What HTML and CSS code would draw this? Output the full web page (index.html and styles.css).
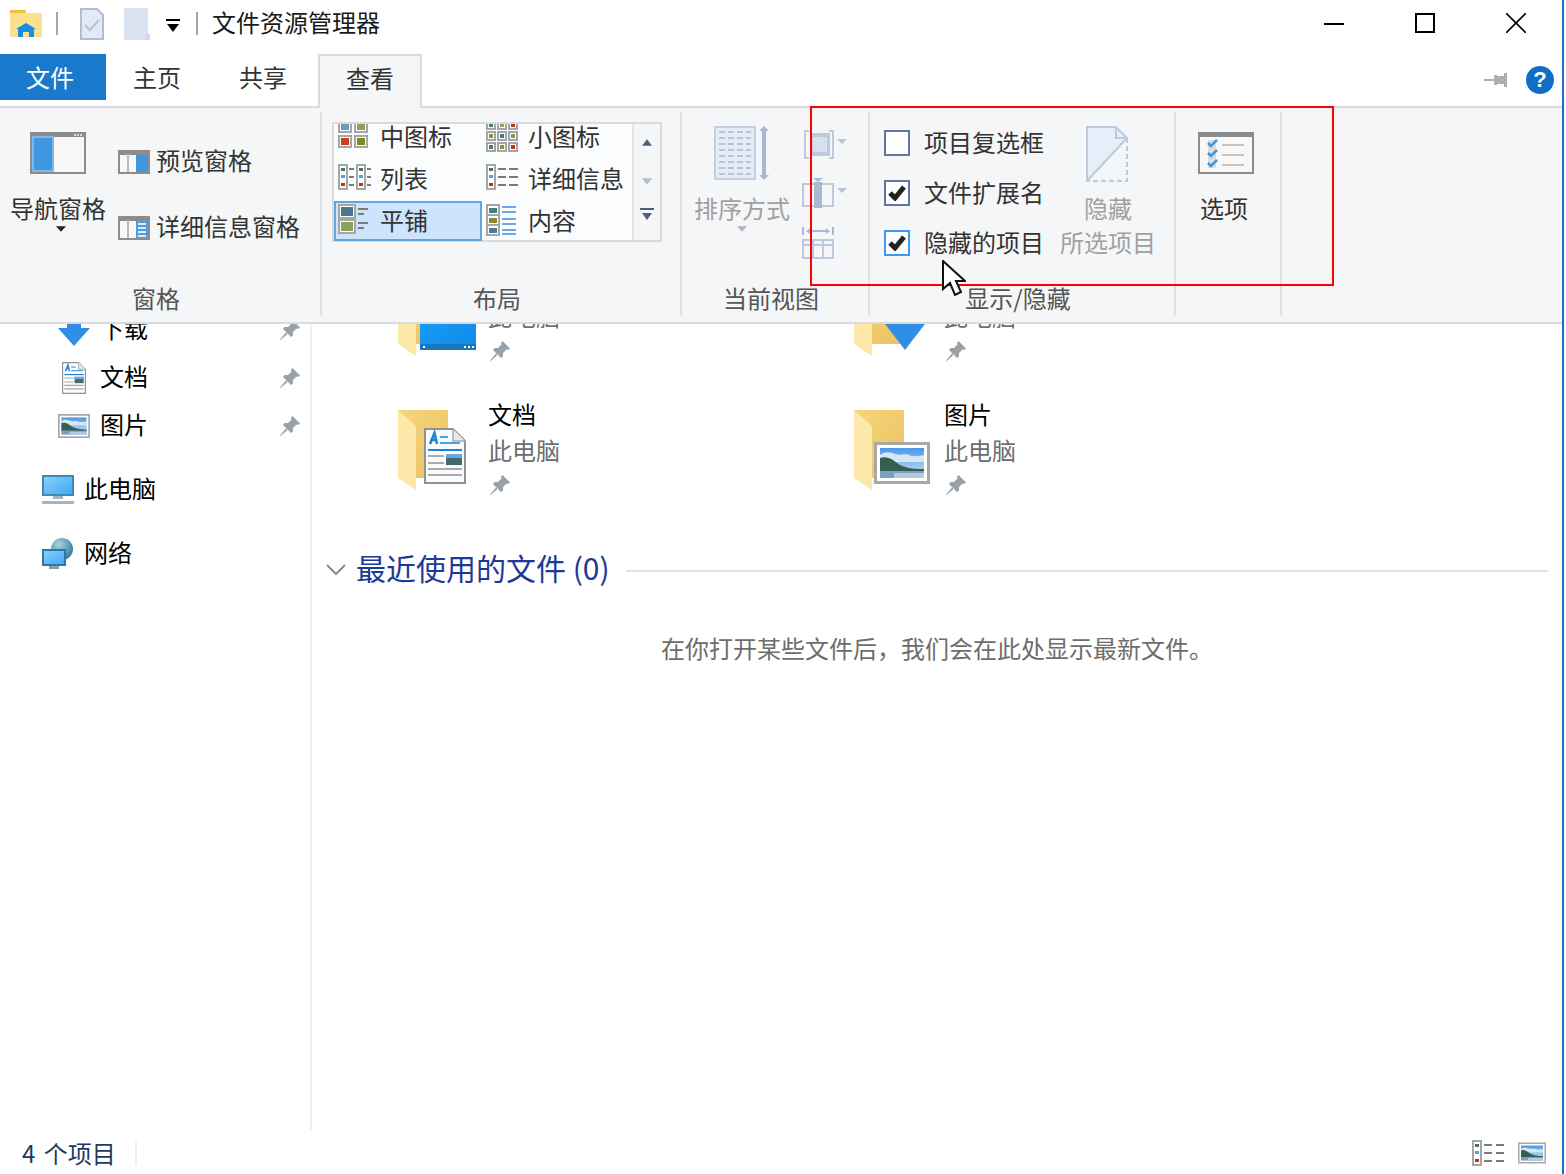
FILE: index.html
```html
<!DOCTYPE html>
<html lang="zh-CN">
<head>
    <meta charset="UTF-8">
    <title>文件资源管理器</title>
    <link rel="stylesheet" href="styles.css">
</head>
<body>
    <!-- shared icons -->
    <svg class="defs" width="0" height="0">
        <defs>
            <linearGradient id="sky" x1="0" y1="0" x2="0" y2="1"><stop offset="0" stop-color="#4f97e6"/><stop offset="1" stop-color="#cfe4f6"/></linearGradient>
            <linearGradient id="back" x1="0" y1="0" x2="1" y2="1"><stop offset="0" stop-color="#f6d67a"/><stop offset="1" stop-color="#ecc062"/></linearGradient>
            <linearGradient id="screen" x1="0" y1="0" x2="1" y2="1"><stop offset="0" stop-color="#1aa0fa"/><stop offset="1" stop-color="#0f8ae8"/></linearGradient>
            <linearGradient id="pale" x1="0" y1="0" x2="1" y2="1"><stop offset="0" stop-color="#8fd0fa"/><stop offset="1" stop-color="#3aa8f4"/></linearGradient>
            <radialGradient id="globe" cx="0.35" cy="0.3" r="0.8"><stop offset="0" stop-color="#a8d2e2"/><stop offset="0.6" stop-color="#5d9cba"/><stop offset="1" stop-color="#2f6f8a"/></radialGradient>
        </defs>
        <symbol id="pin" viewBox="0 0 20 20">
            <path fill="#98a1a8" d="M12.5 0 20 7.5 18 9l-1.5-.5L13 12v3.5L11 17 3 9l1.5-2H8l3.5-3.5L11 1.5z"/>
            <path fill="#98a1a8" d="M6 12.5 0 19.5l.5.5L7.5 14z"/>
        </symbol>
        <symbol id="folder" viewBox="0 0 80 84">
            <path fill="url(#back)" d="M0 2h50v68H18z"/>
            <path fill="#fce9a9" d="M0 2 18 18v64L0 70z"/>
        </symbol>
        <symbol id="landscape" viewBox="0 0 56 42">
            <rect x="1.500" y="1.500" width="53" height="39" fill="#fff" stroke="#a8a8a8" stroke-width="3"/>
            <rect x="6" y="6" width="44" height="30" fill="url(#sky)"/>
            <path fill="#d5e6f5" d="M6 13c5-4 10-3 15-1s10-1 14 1 10 1 15 0v7H6z"/>
            <path fill="#35604f" d="M6 16c6-2 11 0 17 5s17 6 27 6v3H6z"/>
            <rect x="6" y="29" width="44" height="7" fill="#7d9fc0"/>
            <rect x="20" y="31" width="30" height="5" fill="#b5c9dc"/>
        </symbol>
        <symbol id="textdoc" viewBox="0 0 42 56">
            <path fill="#fbfbfb" stroke="#8e9295" stroke-width="2" d="M1 1h28l12 12v42H1z"/>
            <path fill="#e8e8e8" stroke="#a8abad" stroke-width="1.500" d="M29 1v12h12"/>
            <path fill="none" stroke="#1a84d8" stroke-width="2.500" d="M6 16 10.500 5 13 16M8 12h4"/>
            <path stroke="#4aa2e6" stroke-width="2" d="M16 9h8M16 15h20"/>
            <path stroke="#1a84d8" stroke-width="2" d="M4 22h34"/>
            <path stroke="#a8abad" stroke-width="2" d="M4 28h16M4 35h16M4 41h34M4 47h34"/>
            <rect x="22" y="26" width="16" height="11" fill="#3f6b6c"/>
            <rect x="22" y="26" width="16" height="4" fill="#6ca6e0"/>
        </symbol>
        <symbol id="caret" viewBox="0 0 14 8">
            <path d="M0 0h14L7 8z"/>
        </symbol>
    </svg>

    <div class="window">
        <header class="titlebar">
            <svg class="qa-folder" width="32" height="28" viewBox="0 0 32 28">
                <path fill="#fbe08f" d="M0 4h32v24H0z"/>
                <path fill="#f0c23c" d="M0 1h16v3H0z"/>
                <path fill="#1a8ee0" d="M16 14 26 20h-2v8h-5v-5h-6v5H8v-8H6z"/>
            </svg>
            <span class="qa-sep"></span>
            <svg class="qa-doc" width="24" height="32" viewBox="0 0 24 32">
                <path fill="#e3eaf5" stroke="#b0bdd4" stroke-width="2" d="M1 1h16l6 6v24H1z"/>
                <path fill="none" stroke="#b6c2d6" stroke-width="2" d="M5 17l5 5 9-10"/>
            </svg>
            <svg class="qa-blank" width="26" height="32" viewBox="0 0 26 32">
                <path fill="#d9e3f2" d="M0 0h24v26h2v6H0z"/>
                <path fill="none" stroke="#c3cfe2" d="M22 27h3v4h-3z"/>
            </svg>
            <svg class="qa-drop" width="14" height="13" viewBox="0 0 14 13">
                <path d="M0 0h14v2H0zM1 5h12L7 13z"/>
            </svg>
            <span class="qa-sep qa-sep-last"></span>
            <h1 class="title">文件资源管理器</h1>
            <div class="winbtns">
                <span class="winbtn"><svg width="20" height="20" viewBox="0 0 20 20"><path stroke="#000" stroke-width="2" d="M0 11h20"/></svg></span>
                <span class="winbtn"><svg width="20" height="20" viewBox="0 0 20 20"><rect x="1" y="1" width="18" height="18" fill="none" stroke="#000" stroke-width="2"/></svg></span>
                <span class="winbtn"><svg width="20" height="20" viewBox="0 0 20 20"><path stroke="#000" stroke-width="1.600" d="M0 0l20 20M20 0 0 20"/></svg></span>
            </div>
        </header>

        <nav class="tabs">
            <a class="tab tab-file">文件</a>
            <a class="tab">主页</a>
            <a class="tab">共享</a>
            <a class="tab tab-active">查看</a>
            <div class="tabs-right">
                <svg width="24" height="14" viewBox="0 0 24 14">
                    <path fill="#a8b0b6" d="M0 6h10v2H0z"/>
                    <path fill="#a8b0b6" d="M10 2h3v1h7V0h3v14h-3v-3h-7v1h-3z"/>
                </svg>
                <svg width="28" height="28" viewBox="0 0 28 28">
                    <circle cx="14" cy="14" r="14" fill="#0f6fc6"/>
                    <text class="help-mark" x="14" y="21" text-anchor="middle">?</text>
                </svg>
            </div>
        </nav>

        <section class="ribbon">
            <div class="group group-panes">
                <div class="group-body">
                    <div class="big-btn big-btn-panes">
                        <svg class="big-icon" width="56" height="42" viewBox="0 0 56 42">
                            <rect x="1" y="1" width="54" height="40" fill="#f7f7f7" stroke="#8c8c8c" stroke-width="2"/>
                            <rect x="2" y="2" width="52" height="3" fill="#8c8c8c"/>
                            <rect x="2" y="4" width="22" height="36" fill="#7fb8e8"/>
                            <rect x="4" y="6" width="18" height="32" fill="#3f97e0"/>
                            <path stroke="#d8d8d8" stroke-width="2" stroke-dasharray="2 1" d="M44 3h9"/>
                        </svg>
                        <span class="big-label">导航窗格</span>
                        <svg class="caret caret-panes" width="10" height="6"><use href="#caret"/></svg>
                    </div>
                    <div class="pane-list">
                        <div class="pane-row">
                            <svg width="32" height="24" viewBox="0 0 32 24">
                                <rect x="1" y="1" width="30" height="22" fill="#f7f7f7" stroke="#8c8c8c" stroke-width="2"/>
                                <rect x="2" y="2" width="28" height="3" fill="#8c8c8c"/>
                                <rect x="9" y="4" width="2" height="18" fill="#bbb"/>
                                <rect x="18" y="5" width="12" height="17" fill="#3f97e0"/>
                            </svg>
                            <span>预览窗格</span>
                        </div>
                        <div class="pane-row">
                            <svg width="32" height="24" viewBox="0 0 32 24">
                                <rect x="1" y="1" width="30" height="22" fill="#f7f7f7" stroke="#8c8c8c" stroke-width="2"/>
                                <rect x="2" y="2" width="28" height="3" fill="#8c8c8c"/>
                                <rect x="9" y="4" width="2" height="18" fill="#bbb"/>
                                <rect x="18" y="5" width="12" height="17" fill="#4d9fe3"/>
                                <path stroke="#dcebf8" stroke-width="2" d="M20 8h8M20 12h8M20 16h8M20 20h8"/>
                            </svg>
                            <span>详细信息窗格</span>
                        </div>
                    </div>
                </div>
                <div class="group-label">窗格</div>
            </div>

            <div class="group group-layout">
                <div class="group-body">
                    <div class="gallery">
                        <div class="gallery-cells">
                            <div class="gallery-grid">
                                <div class="cell">
                                    <svg width="42" height="40" viewBox="0 0 42 40">
                                        <g fill="#fff" stroke="#a6a6a6" stroke-width="2"><rect x="1" y="2" width="12" height="13"/><rect x="17" y="2" width="12" height="13"/><rect x="1" y="19" width="12" height="11"/><rect x="17" y="19" width="12" height="11"/></g>
                                        <rect x="3" y="6" width="8" height="7" fill="#6d9ab8"/><rect x="19" y="6" width="8" height="7" fill="#9a9a5e"/>
                                        <rect x="3" y="21" width="8" height="7" fill="#c8401e"/><rect x="19" y="21" width="8" height="7" fill="#7d8a22"/>
                                    </svg>
                                    <span>中图标</span>
                                </div>
                                <div class="cell">
                                    <svg width="42" height="40" viewBox="0 0 42 40">
                                        <g fill="#fff" stroke="#a6a6a6" stroke-width="2">
                                            <rect x="1" y="4" width="8" height="8"/><rect x="12" y="4" width="8" height="8"/><rect x="23" y="4" width="8" height="8"/>
                                            <rect x="1" y="15" width="8" height="8"/><rect x="12" y="15" width="8" height="8"/><rect x="23" y="15" width="8" height="8"/>
                                            <rect x="1" y="26" width="8" height="8"/><rect x="12" y="26" width="8" height="8"/><rect x="23" y="26" width="8" height="8"/>
                                        </g>
                                        <g>
                                            <rect x="3" y="6" width="4" height="4" fill="#4a7a78"/><rect x="14" y="6" width="4" height="4" fill="#8da35a"/><rect x="25" y="6" width="4" height="4" fill="#c8301e"/>
                                            <rect x="3" y="17" width="4" height="4" fill="#9a8a2a"/><rect x="14" y="17" width="4" height="4" fill="#4a7a98"/><rect x="25" y="17" width="4" height="4" fill="#7d9a52"/>
                                            <rect x="3" y="28" width="4" height="4" fill="#4a7a78"/><rect x="14" y="28" width="4" height="4" fill="#9a8a2a"/><rect x="25" y="28" width="4" height="4" fill="#c8301e"/>
                                        </g>
                                    </svg>
                                    <span>小图标</span>
                                </div>
                                <div class="cell">
                                    <svg width="42" height="40" viewBox="0 0 42 40">
                                        <g fill="#fff" stroke="#a6a6a6" stroke-width="2"><rect x="1" y="6" width="8" height="24"/><rect x="19" y="6" width="8" height="24"/></g>
                                        <g><rect x="3" y="9" width="4" height="3" fill="#3f7a68"/><rect x="3" y="16" width="4" height="3" fill="#5a9ae8"/><rect x="3" y="24" width="4" height="3" fill="#d02a1e"/><rect x="21" y="9" width="4" height="3" fill="#3f7a68"/><rect x="21" y="16" width="4" height="3" fill="#5a9ae8"/><rect x="21" y="24" width="4" height="3" fill="#d02a1e"/></g>
                                        <path stroke="#7a7a7a" stroke-width="2" d="M11 10h5M11 18h5M11 26h5M29 10h4M29 18h4M29 26h4"/>
                                    </svg>
                                    <span>列表</span>
                                </div>
                                <div class="cell">
                                    <svg width="42" height="40" viewBox="0 0 42 40">
                                        <rect x="1" y="6" width="8" height="24" fill="#fff" stroke="#a6a6a6" stroke-width="2"/>
                                        <g><rect x="3" y="9" width="4" height="3" fill="#3f7a68"/><rect x="3" y="16" width="4" height="3" fill="#5a9ae8"/><rect x="3" y="24" width="4" height="3" fill="#d02a1e"/></g>
                                        <path stroke="#7a7a7a" stroke-width="2" d="M12 10h8M12 18h8M12 26h8M23 10h9M23 18h9M23 26h9"/>
                                    </svg>
                                    <span>详细信息</span>
                                </div>
                                <div class="cell cell-selected">
                                    <svg width="42" height="40" viewBox="0 0 42 40">
                                        <g fill="#fff" stroke="#a6a6a6" stroke-width="2"><rect x="1" y="4" width="16" height="13"/><rect x="1" y="19" width="16" height="13"/></g>
                                        <rect x="3" y="6" width="12" height="9" fill="#4a7a88"/><rect x="3" y="21" width="12" height="9" fill="#8da35a"/>
                                        <path stroke="#7a7a7a" stroke-width="2" d="M20 8h10M20 13h6M20 22h10M20 27h6"/>
                                    </svg>
                                    <span>平铺</span>
                                </div>
                                <div class="cell">
                                    <svg width="42" height="40" viewBox="0 0 42 40">
                                        <g fill="#fff" stroke="#a6a6a6" stroke-width="2"><rect x="1" y="4" width="12" height="30"/></g>
                                        <path stroke="#a6a6a6" stroke-width="2" d="M1 14h12M1 24h12"/>
                                        <rect x="3" y="7" width="8" height="5" fill="#4a7a88"/><rect x="3" y="17" width="8" height="5" fill="#8a8a2a"/><rect x="3" y="27" width="8" height="5" fill="#4a7a98"/>
                                        <path stroke="#6aa8ea" stroke-width="2" d="M16 6h14M16 11h14M16 18h14M16 23h14M16 29h14M16 33h14"/>
                                    </svg>
                                    <span>内容</span>
                                </div>
                            </div>
                        </div>
                        <div class="gallery-scroll">
                            <svg width="10" height="7" viewBox="0 0 12 8"><path fill="#4a5e7e" d="M6 0l6 8H0z"/></svg>
                            <svg width="10" height="7" viewBox="0 0 12 8"><path fill="#b4bdcb" d="M0 0h12L6 8z"/></svg>
                            <svg width="14" height="12" viewBox="0 0 14 12"><path fill="#4a5e7e" d="M0 0h14v2H0zM2 5h10l-5 7z"/></svg>
                        </div>
                    </div>
                </div>
                <div class="group-label">布局</div>
            </div>

            <div class="group group-view">
                <div class="group-body">
                    <div class="big-btn big-btn-sort">
                        <svg class="big-icon" width="56" height="56" viewBox="0 0 56 56">
                            <rect x="1" y="1" width="40" height="52" fill="#e6ecf6" stroke="#c4d0e2" stroke-width="2"/>
                            <path stroke="#b9c5d8" stroke-width="2" stroke-dasharray="6 3" d="M5 6h32M5 12h32M5 18h32M5 24h32M5 30h32M5 36h32M5 42h32M5 48h32"/>
                            <path fill="#a8b8d2" d="M50 0l5 5h-3v44h3l-5 5-5-5h3V5h-3z"/>
                        </svg>
                        <span class="big-label">排序方式</span>
                        <svg class="caret caret-off" width="10" height="6"><use href="#caret"/></svg>
                    </div>
                    <div class="view-tools">
                        <svg width="48" height="34" viewBox="0 0 48 34">
                            <path fill="none" stroke="#bccade" stroke-width="2" d="M7 3H3v27h4M27 3h4v27h-4"/>
                            <rect x="8" y="5" width="20" height="23" fill="#bccade"/>
                            <rect x="11" y="9" width="14" height="15" fill="#d5dfee"/>
                            <path fill="#bcc4d0" d="M35 11h10l-5 5z"/>
                        </svg>
                        <svg width="48" height="34" viewBox="0 0 48 34">
                            <rect x="1" y="7" width="30" height="22" fill="none" stroke="#bccade" stroke-width="2"/>
                            <rect x="12" y="5" width="8" height="26" fill="#a9b9d2"/>
                            <path fill="#a9b9d2" d="M11 1h10l-5 4z"/>
                            <path fill="#bcc4d0" d="M35 11h10l-5 5z"/>
                        </svg>
                        <svg width="48" height="34" viewBox="0 0 48 34">
                            <path fill="none" stroke="#bccade" stroke-width="2" d="M1 14h30v18H1zM11 14v18M21 14v18M1 19h30"/>
                            <path stroke="#a9b9d2" stroke-width="2" fill="none" d="M1 1v8M31 1v8M5 5h22"/>
                            <path fill="#a9b9d2" d="M4 5l4-3v6zM28 5l-4-3v6z"/>
                        </svg>
                    </div>
                </div>
                <div class="group-label">当前视图</div>
            </div>

            <div class="group group-show">
                <div class="group-body">
                    <div class="check-list">
                        <label class="check-row"><span class="check"></span>项目复选框</label>
                        <label class="check-row"><span class="check"><svg width="18" height="16" viewBox="0 0 18 16"><path fill="none" stroke="#222" stroke-width="5" d="M2 8l5 5L16 2"/></svg></span>文件扩展名</label>
                        <label class="check-row"><span class="check check-hot"><svg width="18" height="16" viewBox="0 0 18 16"><path fill="none" stroke="#222" stroke-width="5" d="M2 8l5 5L16 2"/></svg></span>隐藏的项目</label>
                    </div>
                    <div class="big-btn big-btn-hide">
                        <svg class="big-icon" width="42" height="56" viewBox="0 0 42 56">
                            <path fill="#e6eef9" d="M1 1h29l11 11L1 55z"/>
                            <path fill="none" stroke="#bccade" stroke-width="2" d="M41 12 1 55V1h29"/>
                            <path fill="#e6eef9" stroke="#bccade" stroke-width="2" d="M30 1v11h11z"/>
                            <path fill="none" stroke="#bccade" stroke-width="2" stroke-dasharray="5 3" d="M41 12v43H1"/>
                        </svg>
                        <span class="big-label">隐藏</span>
                        <span class="big-label">所选项目</span>
                    </div>
                </div>
                <div class="group-label">显示/隐藏</div>
            </div>

            <div class="group group-options">
                <div class="group-body">
                    <div class="big-btn big-btn-options">
                        <svg class="big-icon" width="56" height="42" viewBox="0 0 56 42">
                            <rect x="1" y="1" width="54" height="40" fill="#f8f8f8" stroke="#8c8c8c" stroke-width="2"/>
                            <rect x="2" y="2" width="52" height="3" fill="#8c8c8c"/>
                            <rect x="10" y="8" width="8" height="28" fill="#dcdcdc"/>
                            <path fill="none" stroke="#3f97e0" stroke-width="2.500" d="M10 11l3 3 6-6M10 21l3 3 6-6M10 31l3 3 6-6"/>
                            <path stroke="#c4c4c4" stroke-width="2" d="M24 13h22M24 23h22M24 33h22"/>
                        </svg>
                        <span class="big-label big-label-dark">选项</span>
                    </div>
                </div>
                <div class="group-label"></div>
            </div>
        </section>

        <div class="main">
            <aside class="sidebar">
                <ul class="tree">
                    <li class="tree-item tree-sub">
                        <svg width="32" height="32" viewBox="0 0 32 32"><path fill="#2f8fe6" d="M9 0h14v14h9L16 32 0 14h9z"/></svg>
                        <span>下载</span>
                        <svg class="pin" width="20" height="20"><use href="#pin"/></svg>
                    </li>
                    <li class="tree-item tree-sub">
                        <svg width="32" height="32" viewBox="0 0 32 32"><use href="#textdoc" x="4" y="0" width="24" height="32"/></svg>
                        <span>文档</span>
                        <svg class="pin" width="20" height="20"><use href="#pin"/></svg>
                    </li>
                    <li class="tree-item tree-sub">
                        <svg width="32" height="24"><use href="#landscape" width="32" height="24"/></svg>
                        <span>图片</span>
                        <svg class="pin" width="20" height="20"><use href="#pin"/></svg>
                    </li>
                    <li class="tree-item tree-top">
                        <svg width="32" height="30" viewBox="0 0 32 30">
                            <rect x="1" y="1" width="30" height="19" fill="url(#pale)" stroke="#3d8ab8" stroke-width="2"/>
                            <path fill="#a6b4c2" d="M11 21h10v3H11zM0 26h32v3H0z"/>
                        </svg>
                        <span>此电脑</span>
                    </li>
                    <li class="tree-item tree-top">
                        <svg width="32" height="32" viewBox="0 0 32 32">
                            <circle cx="20" cy="11" r="11" fill="url(#globe)"/>
                            <rect x="1" y="12" width="22" height="15" fill="url(#pale)" stroke="#2a7aa8" stroke-width="2"/>
                            <path fill="#8a9cac" d="M7 28h10v3H7z"/>
                        </svg>
                        <span>网络</span>
                    </li>
                </ul>
            </aside>

            <main class="content">
                <div class="tiles">
                    <div class="tile">
                        <svg class="tile-icon" width="80" height="84" viewBox="0 0 80 84">
                            <use href="#folder" width="80" height="84"/>
                            <rect x="22" y="22" width="56" height="54" fill="url(#screen)"/>
                            <rect x="22" y="70" width="56" height="6" fill="#1778ba"/>
                            <path stroke="#fff" stroke-width="2" stroke-dasharray="2 2" d="M25 73h2M66 73h10"/>
                        </svg>
                        <div class="tile-text">
                            <div class="tile-name">桌面</div>
                            <div class="tile-sub">此电脑</div>
                            <svg class="pin" width="20" height="20"><use href="#pin"/></svg>
                        </div>
                    </div>
                    <div class="tile">
                        <svg class="tile-icon" width="80" height="84" viewBox="0 0 80 84">
                            <use href="#folder" width="80" height="84"/>
                            <path fill="#2f8fe6" d="M40 30h22v16h12L51 76 28 46h12z"/>
                        </svg>
                        <div class="tile-text">
                            <div class="tile-name">下载</div>
                            <div class="tile-sub">此电脑</div>
                            <svg class="pin" width="20" height="20"><use href="#pin"/></svg>
                        </div>
                    </div>
                    <div class="tile">
                        <svg class="tile-icon" width="80" height="84" viewBox="0 0 80 84">
                            <use href="#folder" width="80" height="84"/>
                            <use href="#textdoc" x="26" y="20" width="42" height="56"/>
                        </svg>
                        <div class="tile-text">
                            <div class="tile-name">文档</div>
                            <div class="tile-sub">此电脑</div>
                            <svg class="pin" width="20" height="20"><use href="#pin"/></svg>
                        </div>
                    </div>
                    <div class="tile">
                        <svg class="tile-icon" width="80" height="84" viewBox="0 0 80 84">
                            <use href="#folder" width="80" height="84"/>
                            <use href="#landscape" x="20" y="34" width="56" height="42"/>
                        </svg>
                        <div class="tile-text">
                            <div class="tile-name">图片</div>
                            <div class="tile-sub">此电脑</div>
                            <svg class="pin" width="20" height="20"><use href="#pin"/></svg>
                        </div>
                    </div>
                </div>

                <div class="section-head">
                    <svg class="chevron" width="20" height="12" viewBox="0 0 20 12"><path fill="none" stroke="#8a8a8a" stroke-width="2" d="M1 1l9 9 9-9"/></svg>
                    <h2>最近使用的文件 (0)</h2>
                    <span class="section-line"></span>
                </div>
                <p class="empty">在你打开某些文件后，我们会在此处显示最新文件。</p>
            </main>
        </div>

        <footer class="statusbar">
            <span class="status-count">4 个项目</span>
            <span class="status-sep"></span>
            <div class="status-views">
                <svg width="32" height="26" viewBox="0 0 32 26">
                    <rect x="1" y="1" width="8" height="24" fill="#fff" stroke="#a6a6a6" stroke-width="2"/>
                    <rect x="3" y="4" width="4" height="3" fill="#3f7a68"/><rect x="3" y="11" width="4" height="3" fill="#5a9ae8"/><rect x="3" y="19" width="4" height="3" fill="#d02a1e"/>
                    <path stroke="#7a7a7a" stroke-width="2" d="M12 5h8M24 5h8M12 13h8M24 13h8M12 21h8M24 21h8"/>
                </svg>
                <svg width="28" height="22"><use href="#landscape" width="28" height="22"/></svg>
            </div>
        </footer>
    </div>

    <!-- annotation drawn on top of the screenshot -->
    <div class="highlight"></div>
    <svg class="cursor" width="24" height="40" viewBox="0 0 24 40">
        <path fill="#fff" stroke="#111" stroke-width="2" d="M1 1v28l7-6 5 12 6-3-5-11h9z"/>
    </svg>
</body>
</html>
```

FILE: styles.css
```css
* {
    box-sizing: border-box;
}
html, body {
    margin: 0;
    height: 100%;
}
body {
    position: relative;
    width: 1566px;
    height: 1174px;
    overflow: hidden;
    background: #fff;
    color: #333;
    font-family: "Noto Sans CJK SC", "Noto Sans", sans-serif;
    font-size: 24px;
    line-height: 34px;
}
svg {
    display: block;
    flex: none;
}
.defs {
    height: 0;
    width: 0;
}
.window {
    display: flex;
    flex-direction: column;
    width: 1564px;
    height: 1174px;
    border-right: 2px solid #1a6fc4;
}

/* title bar */
.titlebar {
    display: flex;
    align-items: center;
    flex: none;
    height: 54px;
    padding: 0 1px 8px 10px;
}
.qa-sep {
    width: 2px;
    height: 23px;
    margin-left: 14px;
    background: #a6a6a6;
}
.qa-sep-last {
    margin-left: 16px;
}
.qa-doc {
    margin-left: 22px;
    margin-top: 2px;
}
.qa-blank {
    margin-left: 20px;
    margin-top: 2px;
}
.qa-drop {
    margin-left: 16px;
    margin-top: 4px;
}
.title {
    margin: 0 0 2px 14px;
    font-size: 24px;
    font-weight: 400;
    color: #1a1a1a;
}
.winbtns {
    display: flex;
    margin-left: auto;
}
.winbtn {
    display: flex;
    justify-content: center;
    align-items: center;
    width: 91px;
    height: 44px;
}

/* tabs */
.tabs {
    display: flex;
    align-items: flex-start;
    flex: none;
    height: 54px;
    border-bottom: 2px solid #dadbdc;
}
.tab {
    width: 106px;
    height: 46px;
    padding-right: 4px;
    color: #333;
    line-height: 46px;
    text-align: center;
}
.tab-file {
    padding-right: 6px;
    background: #1979ca;
    color: #fff;
}
.tab-active {
    width: 104px;
    height: 54px;
    padding-right: 0;
    border: 2px solid #dadbdc;
    border-bottom: 0;
    background: #f5f6f7;
    line-height: 44px;
}
.tabs-right {
    display: flex;
    align-items: center;
    gap: 18px;
    height: 52px;
    margin-left: auto;
    padding-right: 8px;
}
.help-mark {
    fill: #fff;
    font-family: "Liberation Sans", sans-serif;
    font-size: 22px;
    font-weight: 700;
}

/* ribbon */
.ribbon {
    display: flex;
    flex: none;
    height: 216px;
    padding: 4px 0 6px;
    border-bottom: 2px solid #dadbdc;
    background: #f5f6f7;
}
.group {
    display: flex;
    flex-direction: column;
    border-right: 2px solid #e1e2e3;
}
.group-panes { width: 322px; }
.group-layout { width: 360px; }
.group-view { width: 188px; }
.group-show { width: 306px; }
.group-options { width: 106px; }
.group-body {
    display: flex;
    flex: none;
    height: 170px;
}
.group-label {
    height: 34px;
    padding-right: 8px;
    color: #555;
    line-height: 32px;
    text-align: center;
}
.big-btn {
    display: flex;
    flex-direction: column;
    align-items: center;
    flex: none;
    width: 96px;
}
.big-label {
    color: #a0a0a0;
    white-space: nowrap;
}
.caret {
    margin-top: 1px;
    fill: #222;
}
.caret-panes {
    margin-left: 6px;
}
.caret-off {
    fill: #aeb4be;
}
.big-btn-panes {
    margin-left: 10px;
    padding-top: 20px;
}
.big-btn-panes .big-label,
.big-label-dark {
    margin-top: 17px;
    color: #333;
}
.big-btn-sort {
    margin-left: 12px;
    padding-top: 14px;
}
.big-btn-sort .big-label {
    margin-top: 9px;
}
.big-btn-hide {
    margin-left: 16px;
    padding-top: 14px;
}
.big-btn-hide .big-icon {
    margin-right: 2px;
    margin-bottom: 9px;
}
.big-btn-options {
    width: 100px;
    padding-top: 20px;
}
.big-btn-options .big-label {
    margin-top: 17px;
    margin-right: 4px;
}

.pane-list {
    display: flex;
    flex-direction: column;
    gap: 42px;
    margin-left: 12px;
    padding-top: 38px;
}
.pane-row {
    display: flex;
    align-items: center;
    gap: 6px;
    height: 24px;
    white-space: nowrap;
}
.pane-row span {
    margin-bottom: 4px;
}

/* layout gallery */
.gallery {
    display: flex;
    align-items: flex-start;
    width: 330px;
    height: 120px;
    margin: 10px 0 0 10px;
    border: 2px solid #d9dadb;
    background: #fbfcfe;
}
.gallery-cells {
    width: 298px;
    height: 118px;
    overflow: hidden;
}
.gallery-grid {
    display: grid;
    grid-template-columns: 148px 148px;
    grid-auto-rows: 40px;
    row-gap: 2px;
    margin-top: -7px;
}
.cell {
    display: flex;
    align-items: center;
    padding-left: 4px;
    white-space: nowrap;
}
.cell span {
    margin-bottom: 3px;
}
.cell-selected {
    border: 2px solid #64a4e0;
    background: #cce4fc;
    padding-left: 2px;
}
.gallery-scroll {
    display: flex;
    flex-direction: column;
    align-items: center;
    width: 28px;
    height: 116px;
    padding-top: 15px;
    border-left: 2px solid #e3e4e6;
    background: #f5f6f7;
}
.gallery-scroll svg:nth-child(2) {
    margin-top: 32px;
}
.gallery-scroll svg:nth-child(3) {
    margin-top: 23px;
}

.view-tools {
    display: flex;
    flex-direction: column;
    gap: 15px;
    margin-left: 12px;
    padding-top: 16px;
}

/* show / hide */
.check-list {
    display: flex;
    flex-direction: column;
    flex: none;
    margin-left: 14px;
    padding-top: 6px;
}
.check-row {
    display: flex;
    align-items: center;
    gap: 14px;
    height: 50px;
    padding-bottom: 2px;
    white-space: nowrap;
}
.check {
    display: flex;
    justify-content: center;
    align-items: center;
    width: 26px;
    height: 26px;
    margin-top: 2px;
    border: 2px solid #5d77a3;
    background: #fff;
}
.check-hot {
    border-color: #3a99f0;
}

/* main area */
.main {
    display: flex;
    flex: 1;
    min-height: 0;
}
.sidebar {
    flex: none;
    width: 312px;
    overflow: hidden;
    border-right: 2px solid #f0f0f0;
    color: #000;
}
.tree {
    margin: -18px 0 0;
    padding: 0;
    list-style: none;
}
.tree-item {
    display: flex;
    align-items: center;
    gap: 10px;
    height: 48px;
    padding-right: 10px;
}
.tree-item span {
    margin-bottom: 4px;
}
.tree-sub {
    padding-left: 58px;
}
.tree-top {
    margin-top: 16px;
    padding-left: 42px;
}
.tree-item .pin {
    margin-left: auto;
}
.content {
    flex: 1;
    min-width: 0;
    overflow: hidden;
}
.tiles {
    display: grid;
    grid-template-columns: 456px 456px;
    grid-auto-rows: 134px;
    margin-top: -61px;
    padding-left: 86px;
}
.tile {
    display: flex;
    gap: 10px;
}
.tile-icon {
    margin-top: 11px;
}
.tile-name {
    height: 36px;
    color: #000;
    line-height: 34px;
}
.tile-sub {
    height: 36px;
    color: #6d6d6d;
    line-height: 34px;
}
.tile-text .pin {
    margin-top: 6px;
    margin-left: 2px;
}
.section-head {
    display: flex;
    align-items: center;
    margin-top: 17px;
    padding: 0 14px 0 16px;
    height: 40px;
}
.chevron {
    margin: 3px 0 0 -2px;
}
.section-head h2 {
    margin: 0 0 2px 10px;
    color: #1e3a96;
    font-size: 30px;
    font-weight: 400;
    white-space: nowrap;
}
.section-line {
    flex: 1;
    height: 2px;
    margin: 6px 0 0 16px;
    background: #e2e2e2;
}
.empty {
    margin: 43px 0 0;
    color: #6d6d6d;
    text-align: center;
}

/* status bar */
.statusbar {
    display: flex;
    align-items: center;
    flex: none;
    height: 44px;
    padding: 2px 16px 0 22px;
    color: #1f3a5f;
}
.status-count {
    line-height: 30px;
    word-spacing: 3px;
}
.status-sep {
    width: 2px;
    height: 24px;
    margin-left: 19px;
    background: #f0f0f0;
}
.status-views {
    display: flex;
    align-items: center;
    gap: 14px;
    margin-left: auto;
}

/* red box and mouse pointer on top of the window */
.highlight {
    position: absolute;
    left: 810px;
    top: 106px;
    width: 524px;
    height: 180px;
    border: 2px solid #f00;
}
.cursor {
    position: absolute;
    left: 942px;
    top: 260px;
}
```
